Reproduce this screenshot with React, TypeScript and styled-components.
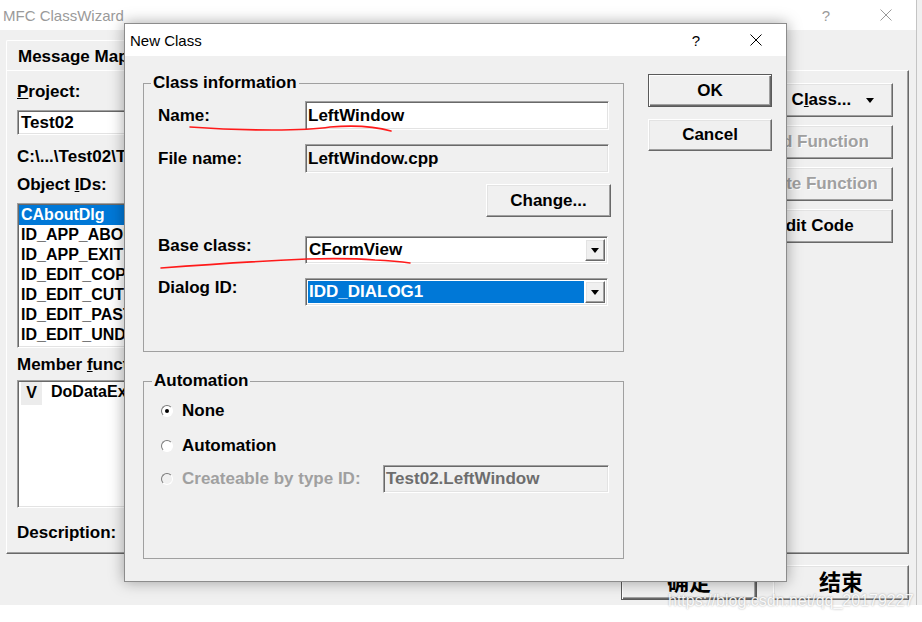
import React from "react";
import styled, { createGlobalStyle, css } from "styled-components";

const colors = {
  face: "#f0f0f0",
  white: "#ffffff",
  light: "#e3e3e3",
  shadow: "#a0a0a0",
  dark: "#696969",
  frame: "#8c8c8c",
  text: "#000000",
  disabled: "#a0a0a0",
  select: "#0078d7",
  ink: "#ff1a1a",
};

const sans = `"Liberation Sans", Arial, sans-serif`;
const cjk = `"Liberation Sans", "Noto Sans CJK SC", sans-serif`;

const GlobalStyle = createGlobalStyle`
  html, body {
    margin: 0;
    padding: 0;
    background: #ffffff;
    font-family: ${sans};
  }
  * { box-sizing: border-box; }
`;

const raised = css`
  border: 1px solid;
  border-color: ${colors.white} ${colors.dark} ${colors.dark} ${colors.white};
  box-shadow: inset -1px -1px 0 ${colors.shadow}, inset 1px 1px 0 ${colors.light};
`;

const sunken = css`
  border: 1px solid;
  border-color: ${colors.shadow} ${colors.white} ${colors.white} ${colors.shadow};
  box-shadow: inset 1px 1px 0 ${colors.dark}, inset -1px -1px 0 ${colors.light};
`;

const Desktop = styled.div`
  position: relative;
  width: 922px;
  height: 622px;
  overflow: hidden;
  background: linear-gradient(to bottom, ${colors.face} 0 605px, #ffffff 605px);
`;

/* ---------- back window: MFC ClassWizard ---------- */

const Window = styled.div`
  width: 917px;
  height: 605px;
  display: flex;
  flex-direction: column;
  background: ${colors.face};
  border-right: 1px solid #c4c4c4;
`;

const TitleBar = styled.div<{ $h: number; $inactive?: boolean }>`
  flex: none;
  height: ${(p) => p.$h}px;
  display: flex;
  align-items: center;
  background: #ffffff;
  color: ${(p) => (p.$inactive ? "#9a9a9a" : "#000000")};
  font-family: ${sans};
  font-size: 15px;
`;

const Caption = styled.span<{ $pad: number }>`
  flex: 1;
  padding-left: ${(p) => p.$pad}px;
  white-space: nowrap;
`;

const CaptionButton = styled.span`
  width: 60px;
  height: 100%;
  display: flex;
  align-items: center;
  justify-content: center;
`;

const CloseIcon = () => (
  <svg width="12" height="12" viewBox="0 0 12 12">
    <path d="M0.5 0.5 L11.5 11.5 M11.5 0.5 L0.5 11.5" stroke="currentColor" strokeWidth="1" fill="none" />
  </svg>
);

const WindowBody = styled.div`
  flex: 1;
  display: flex;
  flex-direction: column;
  padding: 10px 7px 0 6px;
`;

const TabStrip = styled.div`
  display: flex;
  height: 30px;
`;

const Tab = styled.div`
  width: 150px;
  border: 1px solid;
  border-bottom: none;
  border-color: ${colors.white} ${colors.dark} transparent ${colors.white};
  border-radius: 2px 2px 0 0;
  padding: 6px 0 0 11px;
  font-weight: bold;
  font-size: 17px;
  line-height: 20px;
  white-space: nowrap;
`;

const TabPage = styled.div`
  height: 484px;
  border: 1px solid;
  border-color: ${colors.white} ${colors.dark} ${colors.dark} ${colors.white};
  box-shadow: inset -1px -1px 0 ${colors.shadow};
  display: grid;
  grid-template-columns: 1fr 160px;
  padding: 0 15px 0 10px;
`;

const PageColumn = styled.div`
  display: flex;
  flex-direction: column;
`;

const BackLabel = styled.div<{ $mt: number }>`
  margin-top: ${(p) => p.$mt}px;
  font-weight: bold;
  font-size: 17px;
  line-height: 20px;
  white-space: nowrap;
`;

const BackCombo = styled.div`
  ${sunken};
  margin-top: 8px;
  width: 330px;
  height: 25px;
  background: #ffffff;
  display: flex;
  align-items: center;
  padding-left: 3px;
  font-weight: bold;
  font-size: 17px;
`;

const ListBox = styled.div<{ $h: number; $mt: number }>`
  ${sunken};
  margin-top: ${(p) => p.$mt}px;
  width: 330px;
  height: ${(p) => p.$h}px;
  background: #ffffff;
  padding: 1px 1px;
  overflow: hidden;
`;

const ListItem = styled.div<{ $selected?: boolean }>`
  display: flex;
  align-items: center;
  height: 20px;
  padding-left: 2px;
  font-weight: bold;
  font-size: 16px;
  white-space: nowrap;
  background: ${(p) => (p.$selected ? colors.select : "transparent")};
  color: ${(p) => (p.$selected ? "#ffffff" : "#000000")};
`;

const FlagCell = styled.span`
  width: 21px;
  height: 23px;
  margin: 2px 9px 0 0;
  display: flex;
  align-items: center;
  justify-content: center;
  background: #ececec;
`;

const SideButtons = styled.div`
  display: flex;
  flex-direction: column;
  align-items: flex-end;
  gap: 8px;
  padding-top: 12px;
`;

const Button = styled.button<{ $w: number; $h: number; $isDefault?: boolean; $off?: boolean }>`
  ${raised};
  flex: none;
  width: ${(p) => p.$w}px;
  height: ${(p) => p.$h}px;
  background: ${colors.face};
  padding: 0;
  display: flex;
  align-items: center;
  justify-content: center;
  gap: 15px;
  font-family: ${sans};
  font-weight: bold;
  font-size: 17px;
  color: ${(p) => (p.$off ? colors.disabled : colors.text)};
  text-shadow: ${(p) => (p.$off ? "1px 1px 0 #ffffff" : "none")};
  white-space: nowrap;
  ${(p) =>
    p.$isDefault &&
    css`
      border-color: #5a5a5a;
      box-shadow: inset 1px 1px 0 ${colors.white}, inset -1px -1px 0 ${colors.dark},
        inset -2px -2px 0 ${colors.shadow};
    `}
`;

const CjkButton = styled(Button)`
  font-family: ${cjk};
  font-size: 22px;
  padding-bottom: 5px;
`;

const MenuArrow = styled.span`
  width: 0;
  height: 0;
  border-left: 4px solid transparent;
  border-right: 4px solid transparent;
  border-top: 5px solid #000000;
`;

const Footer = styled.div`
  display: flex;
  justify-content: flex-end;
  gap: 16px;
  margin-top: 11px;
`;

/* ---------- front dialog: New Class ---------- */

const Dialog = styled.div`
  position: absolute;
  left: 124px;
  top: 23px;
  width: 663px;
  height: 559px;
  border: 1px solid ${colors.frame};
  background: ${colors.face};
  box-shadow: 0 0 14px rgba(0, 0, 0, 0.35);
  display: flex;
  flex-direction: column;
`;

const DialogBody = styled.div`
  flex: 1;
  display: flex;
  gap: 24px;
  padding: 0 14px 0 18px;
`;

const DialogMain = styled.div`
  width: 481px;
  display: flex;
  flex-direction: column;
`;

const DialogActions = styled.div`
  display: flex;
  flex-direction: column;
  gap: 12px;
  padding-top: 18px;
`;

const GroupBox = styled.fieldset<{ $mt: number; $pad: string }>`
  margin: ${(p) => p.$mt}px 0 0;
  padding: ${(p) => p.$pad};
  min-width: 0;
  border: 1px solid ${colors.shadow};
`;

const Legend = styled.legend`
  margin-left: -7px;
  padding: 0 2px;
  font-weight: bold;
  font-size: 17px;
  line-height: 20px;
`;

const FormRow = styled.div<{ $h: number; $mt: number; $top?: boolean }>`
  display: grid;
  grid-template-columns: 147px 1fr;
  align-items: ${(p) => (p.$top ? "start" : "center")};
  height: ${(p) => p.$h}px;
  margin-top: ${(p) => p.$mt}px;
`;

const Label = styled.span<{ $off?: boolean }>`
  font-weight: bold;
  font-size: 17px;
  line-height: 20px;
  white-space: nowrap;
  color: ${(p) => (p.$off ? colors.disabled : colors.text)};
`;

const Field = styled.div<{ $readonly?: boolean; $dim?: boolean; $w?: number }>`
  ${sunken};
  height: 100%;
  width: ${(p) => (p.$w ? `${p.$w}px` : "auto")};
  margin-left: ${(p) => (p.$w ? "auto" : "0")};
  background: ${(p) => (p.$readonly ? colors.face : "#ffffff")};
  display: flex;
  align-items: center;
  padding-left: 2px;
  font-weight: bold;
  font-size: 17px;
  white-space: nowrap;
  overflow: hidden;
  color: ${(p) => (p.$dim ? "#6d6d6d" : colors.text)};
`;

const ComboBox = styled.div`
  ${sunken};
  height: 100%;
  width: 303px;
  background: #ffffff;
  display: flex;
  padding: 2px;
  font-weight: bold;
  font-size: 17px;
  white-space: nowrap;
`;

const ComboValue = styled.span<{ $selected?: boolean }>`
  flex: 1;
  display: flex;
  align-items: center;
  padding-left: 1px;
  background: ${(p) => (p.$selected ? colors.select : "transparent")};
  color: ${(p) => (p.$selected ? "#ffffff" : colors.text)};
`;

const DropButton = styled.span`
  ${raised};
  width: 20px;
  margin-left: 1px;
  background: ${colors.face};
  display: flex;
  align-items: center;
  justify-content: center;
`;

const RowEnd = styled.div<{ $mt: number }>`
  display: flex;
  justify-content: flex-end;
  margin: ${(p) => p.$mt}px -2px 0 0;
`;

const RadioRow = styled.div<{ $h: number; $mt: number }>`
  display: flex;
  align-items: center;
  gap: 9px;
  height: ${(p) => p.$h}px;
  margin-top: ${(p) => p.$mt}px;
  padding-left: 2px;
`;

const Radio = styled.span<{ $checked?: boolean; $off?: boolean }>`
  flex: none;
  width: 12px;
  height: 12px;
  border-radius: 50%;
  border: 1px solid;
  border-color: #7a7a7a ${colors.white} ${colors.white} #7a7a7a;
  background: ${(p) => (p.$off ? colors.face : "#ffffff")};
  display: flex;
  align-items: center;
  justify-content: center;
  &::after {
    content: "";
    width: 4px;
    height: 4px;
    border-radius: 50%;
    background: ${(p) => (p.$checked ? "#000000" : "transparent")};
  }
`;

const Overlay = styled.svg`
  position: absolute;
  left: 0;
  top: 0;
  pointer-events: none;
`;

const Watermark = styled.div`
  position: absolute;
  left: 668px;
  top: 592px;
  font-family: ${sans};
  font-size: 16px;
  color: rgba(255, 255, 255, 0.92);
  text-shadow: 0 0 2px rgba(0, 0, 0, 0.35);
  white-space: nowrap;
`;

const objectIds = ["ID_APP_ABOUT", "ID_APP_EXIT", "ID_EDIT_COPY", "ID_EDIT_CUT", "ID_EDIT_PASTE", "ID_EDIT_UNDO"];

const App: React.FC = () => (
  <Desktop>
    <GlobalStyle />
    <Window>
      <TitleBar $h={30} $inactive>
        <Caption $pad={3}>MFC ClassWizard</Caption>
        <CaptionButton>?</CaptionButton>
        <CaptionButton>
          <CloseIcon />
        </CaptionButton>
      </TitleBar>
      <WindowBody>
        <TabStrip>
          <Tab>Message Maps</Tab>
        </TabStrip>
        <TabPage>
          <PageColumn>
            <BackLabel $mt={11}>
              <u>P</u>roject:
            </BackLabel>
            <BackCombo>Test02</BackCombo>
            <BackLabel $mt={12}>{"C:\\...\\Test02\\Test02.h"}</BackLabel>
            <BackLabel $mt={8}>
              Object <u>I</u>Ds:
            </BackLabel>
            <ListBox $h={145} $mt={8}>
              <ListItem $selected>CAboutDlg</ListItem>
              {objectIds.map((id) => (
                <ListItem key={id}>{id}</ListItem>
              ))}
            </ListBox>
            <BackLabel $mt={7}>
              Member <u>f</u>unctions:
            </BackLabel>
            <ListBox $h={128} $mt={5}>
              <ListItem>
                <FlagCell>V</FlagCell>DoDataExchange
              </ListItem>
            </ListBox>
            <BackLabel $mt={15}>Description:</BackLabel>
          </PageColumn>
          <SideButtons>
            <Button $w={158} $h={34}>
              <span>
                Add C<u>l</u>ass...
              </span>
              <MenuArrow />
            </Button>
            <Button $w={158} $h={34} $off>
              Add Function
            </Button>
            <Button $w={158} $h={34} $off>
              Delete Function
            </Button>
            <Button $w={158} $h={34}>
              <span>
                <u>E</u>dit Code
              </span>
            </Button>
          </SideButtons>
        </TabPage>
        <Footer>
          <CjkButton $w={136} $h={35} $isDefault>
            确定
          </CjkButton>
          <CjkButton $w={136} $h={35}>
            结束
          </CjkButton>
        </Footer>
      </WindowBody>
    </Window>

    <Dialog>
      <TitleBar $h={32}>
        <Caption $pad={5}>New Class</Caption>
        <CaptionButton>?</CaptionButton>
        <CaptionButton>
          <CloseIcon />
        </CaptionButton>
      </TitleBar>
      <DialogBody>
        <DialogMain>
          <GroupBox $mt={17} $pad="8px 14px 45px 14px">
            <Legend>Class information</Legend>
            <FormRow $h={29} $mt={0}>
              <Label>Name:</Label>
              <Field>LeftWindow</Field>
            </FormRow>
            <FormRow $h={29} $mt={14}>
              <Label>File name:</Label>
              <Field $readonly>LeftWindow.cpp</Field>
            </FormRow>
            <RowEnd $mt={11}>
              <Button $w={125} $h={33}>
                Change...
              </Button>
            </RowEnd>
            <FormRow $h={28} $mt={19} $top>
              <Label>Base class:</Label>
              <ComboBox>
                <ComboValue>CFormView</ComboValue>
                <DropButton>
                  <MenuArrow />
                </DropButton>
              </ComboBox>
            </FormRow>
            <FormRow $h={28} $mt={14} $top>
              <Label>Dialog ID:</Label>
              <ComboBox>
                <ComboValue $selected>IDD_DIALOG1</ComboValue>
                <DropButton>
                  <MenuArrow />
                </DropButton>
              </ComboBox>
            </FormRow>
          </GroupBox>
          <GroupBox $mt={19} $pad="9px 14px 65px 15px">
            <Legend>Automation</Legend>
            <RadioRow $h={22} $mt={0}>
              <Radio $checked />
              <Label>None</Label>
            </RadioRow>
            <RadioRow $h={22} $mt={13}>
              <Radio />
              <Label>Automation</Label>
            </RadioRow>
            <RadioRow $h={28} $mt={8}>
              <Radio $off />
              <Label $off>Createable by type ID:</Label>
              <Field $readonly $dim $w={226}>
                Test02.LeftWindow
              </Field>
            </RadioRow>
          </GroupBox>
        </DialogMain>
        <DialogActions>
          <Button $w={124} $h={33} $isDefault>
            OK
          </Button>
          <Button $w={124} $h={32}>
            Cancel
          </Button>
        </DialogActions>
      </DialogBody>
    </Dialog>

    <Overlay width="922" height="622" viewBox="0 0 922 622">
      <path
        d="M190 127 Q 232 130 272 130 T 330 127 Q 366 124 391 131"
        stroke={colors.ink}
        strokeWidth="1.6"
        fill="none"
        strokeLinecap="round"
      />
      <path
        d="M161 268 Q 240 262 307 259 Q 350 258 375 260 Q 396 261 410 263"
        stroke={colors.ink}
        strokeWidth="1.6"
        fill="none"
        strokeLinecap="round"
      />
    </Overlay>
    <Watermark>https://blog.csdn.net/qq_20179227</Watermark>
  </Desktop>
);

export default App;
